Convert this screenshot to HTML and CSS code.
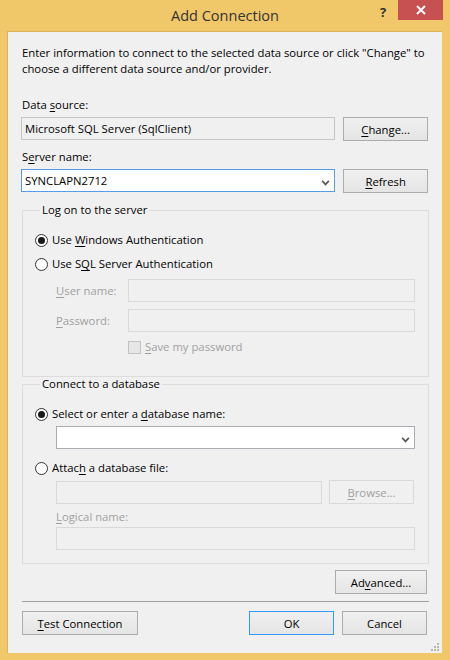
FILE: index.html
```html
<!DOCTYPE html>
<html lang="en">
<head>
    <meta charset="UTF-8">
    <title>Add Connection</title>
    <link rel="stylesheet" href="styles.css">
</head>
<body>
    <div class="window">
        <div class="titlebar">
            <span class="title">Add Connection</span>
            <span class="help">?</span>
            <span class="close">
                <svg width="12" height="10" viewBox="0 0 12 10"><path d="M2 1 L10 9 M10 1 L2 9" stroke="#fff" stroke-width="2"/></svg>
            </span>
        </div>
        <div class="client">
            <p class="intro">Enter information to connect to the selected data source or click "Change" to choose a different data source and/or provider.</p>

            <div class="label first">Data <u>s</u>ource:</div>
            <div class="row">
                <div class="textbox readonly">Microsoft SQL Server (SqlClient)</div>
                <button class="btn"><u>C</u>hange...</button>
            </div>

            <div class="label">S<u>e</u>rver name:</div>
            <div class="row">
                <div class="textbox combo focused">SYNCLAPN2712<span class="arrow"></span></div>
                <button class="btn"><u>R</u>efresh</button>
            </div>

            <fieldset class="group logon">
                <legend>Log on to the server</legend>
                <div class="radio-row first"><span class="radio checked"></span><span>Use <u>W</u>indows Authentication</span></div>
                <div class="radio-row"><span class="radio"></span><span>Use S<u>Q</u>L Server Authentication</span></div>
                <div class="field-row"><span class="field-label disabled"><u>U</u>ser name:</span><div class="textbox disabled-box wide"></div></div>
                <div class="field-row"><span class="field-label disabled"><u>P</u>assword:</span><div class="textbox disabled-box wide"></div></div>
                <div class="check-row disabled"><span class="checkbox"></span><span><u>S</u>ave my password</span></div>
            </fieldset>

            <fieldset class="group database">
                <legend>Connect to a database</legend>
                <div class="radio-row first"><span class="radio checked"></span><span>Select or enter a <u>d</u>atabase name:</span></div>
                <div class="indent"><div class="textbox combo full"><span class="arrow"></span></div></div>
                <div class="radio-row attach"><span class="radio"></span><span>Attac<u>h</u> a database file:</span></div>
                <div class="indent file-row">
                    <div class="textbox disabled-box file"></div>
                    <button class="btn disabled-btn"><u>B</u>rowse...</button>
                </div>
                <div class="indent logical disabled"><u>L</u>ogical name:</div>
                <div class="indent"><div class="textbox disabled-box full logical-box"></div></div>
            </fieldset>

            <div class="advanced-row">
                <button class="btn advanced">Ad<u>v</u>anced...</button>
            </div>

            <div class="separator"></div>

            <div class="footer">
                <button class="btn test"><u>T</u>est Connection</button>
                <div class="footer-right">
                    <button class="btn default">OK</button>
                    <button class="btn">Cancel</button>
                </div>
            </div>
            <span class="grip">
                <svg width="9" height="9" viewBox="0 0 9 9" fill="#b8b8b8">
                    <rect x="6" y="0" width="2" height="2"/>
                    <rect x="3" y="3" width="2" height="2"/><rect x="6" y="3" width="2" height="2"/>
                    <rect x="0" y="6" width="2" height="2"/><rect x="3" y="6" width="2" height="2"/><rect x="6" y="6" width="2" height="2"/>
                </svg>
            </span>
        </div>
    </div>
</body>
</html>
```

FILE: styles.css
```css
html, body {
    margin: 0;
    padding: 0;
}
body {
    width: 450px;
    height: 660px;
    font-family: "Open Sans", "Noto Sans", sans-serif;
    font-size: 11.3px;
    color: #000;
}
.window {
    width: 450px;
    height: 660px;
    background: #f0c86a;
    display: flex;
    flex-direction: column;
}
.titlebar {
    height: 30px;
    position: relative;
    display: flex;
    justify-content: center;
}
.title {
    font-size: 14.5px;
    color: #333;
    line-height: 32px;
}
.help {
    position: absolute;
    left: 380px;
    top: 3px;
    font-weight: bold;
    font-size: 13px;
    color: #333;
}
.close {
    position: absolute;
    left: 398px;
    top: 0;
    width: 45px;
    height: 20px;
    background: #c75050;
    display: flex;
    align-items: center;
    justify-content: center;
}
.client {
    position: relative;
    margin: 1px 8px 7px 7px;
    flex: 1;
    background: #f0f0f0;
    border-left: 1px solid #d9b45a;
    border-top: 1px solid #d9b45a;
    padding: 0 14px 0 14px;
    display: flex;
    flex-direction: column;
}
u {
    text-decoration: underline;
    text-underline-offset: 2px;
}
.intro {
    margin: 13px 0 0 0;
    line-height: 16px;
    width: 410px;
}
.label {
    line-height: 16px;
    margin-top: 8px;
}
.label.first {
    margin-top: 20px;
}
.row {
    display: flex;
    gap: 8px;
    margin-top: 4px;
    margin-left: -1px;
}
.textbox {
    box-sizing: border-box;
    height: 23px;
    border: 1px solid #abadb3;
    background: #fff;
    line-height: 21px;
    padding: 0 3px;
    position: relative;
}
.row .textbox {
    width: 315px;
    margin-top: 0;
}
.readonly {
    background: #f0f0f0;
    border-color: #c6c6c6;
}
.focused {
    border-color: #569de5;
}
.arrow {
    position: absolute;
    right: 5px;
    top: 8px;
    width: 5px;
    height: 5px;
    border-right: 2px solid #555;
    border-bottom: 2px solid #555;
    transform: rotate(45deg) scale(0.8);
}
.btn {
    box-sizing: border-box;
    height: 24px;
    width: 85px;
    border: 1px solid #acacac;
    background: linear-gradient(#f0f0f0, #e5e5e5);
    font-family: inherit;
    font-size: inherit;
    color: #000;
    padding: 0;
}
.group {
    margin: 0;
    padding: 0 13px 0 12px;
    border: 1px solid #dcdcdc;
    width: 407px;
    box-sizing: border-box;
}
.group legend {
    padding: 0 2px;
    margin-left: 5px;
    line-height: 16px;
}
.logon {
    margin-top: 9px;
    padding-bottom: 21px;
}
.database {
    margin-top: -1px;
    padding-bottom: 13px;
}
.radio-row {
    display: flex;
    align-items: center;
    line-height: 16px;
    margin-top: 8px;
}
.radio-row.first {
    margin-top: 14px;
}
.radio-row.attach {
    margin-top: 11px;
}
.radio {
    box-sizing: border-box;
    width: 13px;
    height: 13px;
    border: 1px solid #333;
    border-radius: 50%;
    background: #fff;
    margin-right: 4px;
    display: flex;
    align-items: center;
    justify-content: center;
}
.radio.checked::after {
    content: "";
    width: 7px;
    height: 7px;
    border-radius: 50%;
    background: #1a1a1a;
}
.field-row {
    display: flex;
    align-items: center;
    margin-top: 7px;
    padding-left: 21px;
}
.field-label {
    width: 72px;
}
.disabled {
    color: #a0a0a0;
}
.disabled-box {
    background: #f0f0f0;
    border-color: #d9d9d9;
}
.wide {
    width: 287px;
}
.check-row {
    display: flex;
    align-items: center;
    line-height: 16px;
    margin-top: 7px;
    padding-left: 93px;
}
.checkbox {
    box-sizing: border-box;
    width: 13px;
    height: 13px;
    border: 1px solid #c2c2c2;
    background: #e6e6e6;
    margin-right: 4px;
}
.indent {
    padding-left: 21px;
}
.full {
    width: 359px;
}
.indent .combo {
    margin-top: 4px;
}
.file-row {
    display: flex;
    align-items: center;
    gap: 7px;
    margin-top: 4px;
}
.file {
    width: 266px;
}
.disabled-btn {
    background: #f0f0f0;
    border-color: #d9d9d9;
    color: #a0a0a0;
}
.logical {
    line-height: 16px;
    margin-top: 5px;
}
.logical-box {
    margin-top: 2px;
}
.advanced-row {
    display: flex;
    justify-content: flex-end;
    margin-top: 6px;
    padding-right: 1px;
}
.advanced {
    width: 92px;
}
.separator {
    margin-top: 7px;
    height: 1px;
    background: #a0a0a0;
    width: 407px;
}
.footer {
    display: flex;
    justify-content: space-between;
    margin-top: 9px;
    padding-right: 1px;
}
.test {
    width: 116px;
}
.footer-right {
    display: flex;
    gap: 8px;
}
.default {
    border-color: #3399ff;
}
.grip {
    position: absolute;
    right: 2px;
    bottom: 1px;
    display: flex;
}
```
